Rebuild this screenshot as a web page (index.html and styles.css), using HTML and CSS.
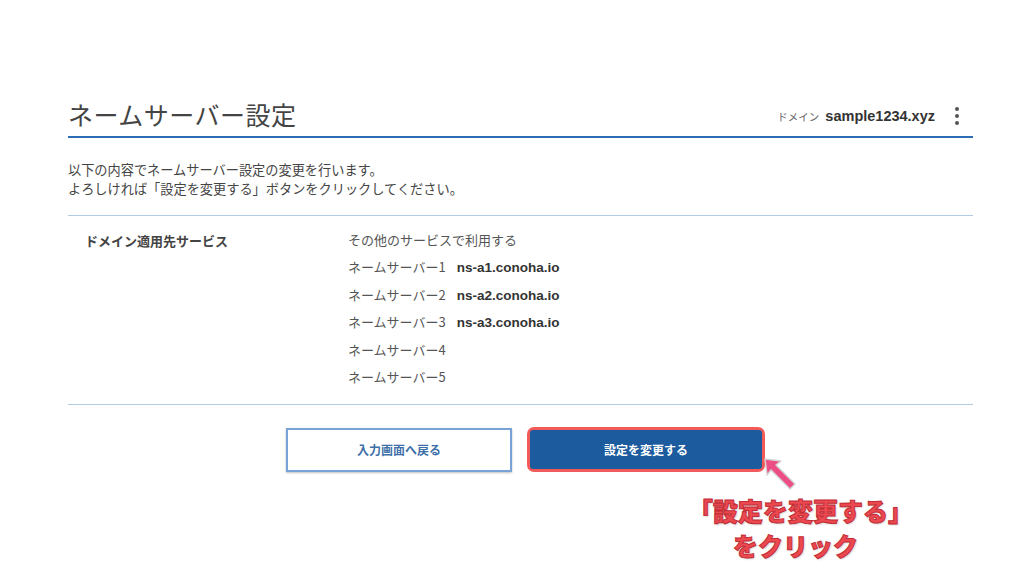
FILE: index.html
```html
<!DOCTYPE html>
<html lang="ja">
<head>
    <meta charset="UTF-8">
    <meta name="viewport" content="width=device-width, initial-scale=1.0">
    <title>ネームサーバー設定</title>
    <link rel="stylesheet" href="styles.css">
</head>
<body>
    <div class="page">
        <div class="header">
            <h1 class="title">ネームサーバー設定</h1>
            <div class="domain">
                <span class="domain-label">ドメイン</span>
                <span class="domain-name">sample1234.xyz</span>
                <span class="kebab"><i></i><i></i><i></i></span>
            </div>
        </div>

        <p class="lead">以下の内容でネームサーバー設定の変更を行います。<br>よろしければ「設定を変更する」ボタンをクリックしてください。</p>

        <div class="detail">
            <div class="detail-label">ドメイン適用先サービス</div>
            <ul class="detail-values">
                <li>その他のサービスで利用する</li>
                <li>ネームサーバー1<b>ns-a1.conoha.io</b></li>
                <li>ネームサーバー2<b>ns-a2.conoha.io</b></li>
                <li>ネームサーバー3<b>ns-a3.conoha.io</b></li>
                <li>ネームサーバー4</li>
                <li>ネームサーバー5</li>
            </ul>
        </div>

        <div class="actions">
            <button class="btn btn-back">入力画面へ戻る</button>
            <div class="highlight">
                <button class="btn btn-primary">設定を変更する</button>
            </div>
        </div>

        <!-- 注釈 -->
        <div class="callout">
            <svg class="arrow" width="36" height="36" viewBox="0 0 36 36">
                <path d="M2 2 L18 4 L13 8 L32 27 L27 32 L8 13 L4 18 Z" fill="#ec4f86" stroke="#d4d4d4" stroke-width="1.5" stroke-linejoin="round"/>
            </svg>
            <div class="note">「設定を変更する」<br>をクリック</div>
        </div>
    </div>
</body>
</html>
```

FILE: styles.css
```css
body {
    margin: 0;
    background: #fff;
    font-family: "Liberation Sans", "Noto Sans CJK JP", sans-serif;
    color: #444;
}
.page {
    width: 905px;
    margin-left: 68px;
    padding-top: 96px;
}
.header {
    display: flex;
    align-items: center;
    justify-content: space-between;
    height: 40px;
    border-bottom: 2px solid #2d6db5;
}
.title {
    margin: 0 0 4px;
    font-family: "Noto Sans CJK JP", sans-serif;
    font-size: 25px;
    font-weight: 400;
    color: #444;
    letter-spacing: 0.5px;
}
.domain {
    display: flex;
    align-items: center;
}
.domain-label {
    font-family: "Noto Sans CJK JP", sans-serif;
    font-size: 10.5px;
    color: #666;
    margin-right: 6px;
}
.domain-name {
    font-size: 14.5px;
    font-weight: bold;
    color: #333;
}
.kebab {
    display: flex;
    flex-direction: column;
    gap: 3px;
    margin-left: 20px;
    margin-right: 14px;
}
.kebab i {
    width: 4px;
    height: 4px;
    border-radius: 50%;
    background: #555;
}
.lead {
    margin: 0;
    padding: 23px 0 17px;
    font-family: "Noto Sans CJK JP", sans-serif;
    font-size: 13.2px;
    line-height: 18.5px;
    color: #444;
    border-bottom: 1px solid #b3cbe2;
}
.detail {
    display: flex;
    padding: 15px 0 9px;
    border-bottom: 1px solid #b3cbe2;
}
.detail-label {
    width: 263px;
    padding-left: 17px;
    font-family: "Noto Sans CJK JP", sans-serif;
    font-size: 13px;
    font-weight: bold;
    color: #444;
}
.detail-values {
    margin: 0;
    padding: 0;
    list-style: none;
    font-family: "Noto Sans CJK JP", sans-serif;
    font-size: 13px;
    color: #555;
}
.detail-values li {
    height: 27.4px;
    line-height: 18px;
}
.detail-values b {
    margin-left: 11px;
    font-family: "Liberation Sans", sans-serif;
    font-size: 13.5px;
    color: #333;
}
.actions {
    display: flex;
    justify-content: center;
    align-items: center;
    gap: 15px;
    padding-top: 22px;
    padding-left: 10px;
}
.btn {
    font-family: "Noto Sans CJK JP", sans-serif;
    font-size: 12px;
    font-weight: bold;
    cursor: pointer;
}
.btn-back {
    width: 226px;
    height: 44px;
    background: #fff;
    color: #3e6fa9;
    border: 2px solid #78a3d6;
    box-shadow: 0 1px 2px rgba(0, 0, 0, 0.25);
}
.highlight {
    padding: 3px;
    border-radius: 7px;
    background: #f25a5a;
}
.btn-primary {
    display: block;
    width: 232px;
    height: 39px;
    background: #1c5b9d;
    color: #fff;
    border: none;
    border-radius: 3px;
}
.callout {
    position: relative;
    margin-left: 620px;
    padding-top: 21px;
    width: 215px;
}
.arrow {
    position: absolute;
    left: 75px;
    top: -15px;
}
.note {
    text-align: center;
    font-family: "Noto Sans CJK JP", sans-serif;
    font-size: 25px;
    font-weight: 900;
    line-height: 35px;
    color: #ec4850;
    -webkit-text-stroke: 1px #c22d36;
    text-shadow: 0 0 2px #fff, 1px 1px 2px rgba(0, 0, 0, 0.25);
    white-space: nowrap;
}
```
